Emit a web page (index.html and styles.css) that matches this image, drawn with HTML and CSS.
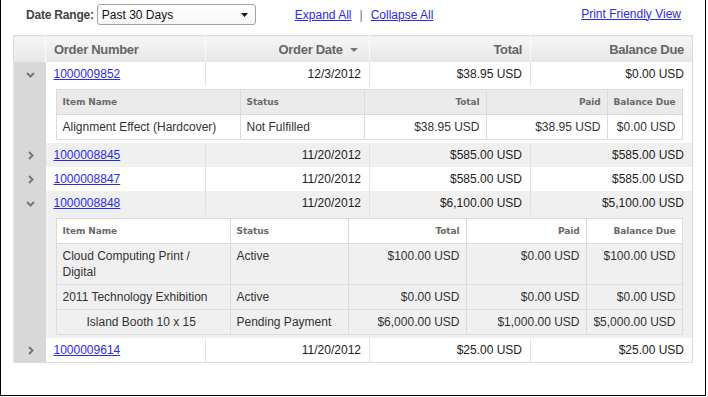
FILE: index.html
```html
<!DOCTYPE html>
<html lang="en">
<head>
    <meta charset="UTF-8">
    <meta name="viewport" content="width=device-width, initial-scale=1.0">
    <title>Order History</title>
    <link rel="stylesheet" href="styles.css">
</head>
<body>
    <div class="page">
        <div class="toolbar">
            <label class="range-label" for="range">Date Range:</label>
            <div class="select-wrap">
                <select id="range" class="range-select">
                    <option>Past 30 Days</option>
                    <option>Past 60 Days</option>
                    <option>Past 90 Days</option>
                </select>
                <svg class="select-arrow" width="7" height="4" viewBox="0 0 7 4"><path d="M0 0H7L3.5 4Z"/></svg>
            </div>
            <div class="bulk-links">
                <a href="#">Expand All</a><span class="sep">|</span><a href="#">Collapse All</a>
            </div>
            <a class="print-link" href="#">Print Friendly View</a>
        </div>

        <table class="orders">
            <colgroup>
                <col class="col-toggle">
                <col class="col-number">
                <col class="col-date">
                <col class="col-total">
                <col class="col-balance">
            </colgroup>
            <thead>
                <tr>
                    <th class="toggle"></th>
                    <th class="left">Order Number</th>
                    <th class="sorted">Order Date <svg class="sort-arrow" width="8" height="4" viewBox="0 0 8 4"><path d="M0 0H8L4 4Z"/></svg></th>
                    <th>Total</th>
                    <th>Balance Due</th>
                </tr>
            </thead>
            <tbody>
                <tr class="order">
                    <td class="toggle"><svg width="9" height="6" viewBox="0 0 9 6"><polyline points="1,1 4.5,4.5 8,1"/></svg></td>
                    <td class="left"><a href="#">1000009852</a></td>
                    <td>12/3/2012</td>
                    <td>$38.95 USD</td>
                    <td>$0.00 USD</td>
                </tr>
                <tr class="detail">
                    <td class="toggle"></td>
                    <td class="detail-cell" colspan="4">
                        <table class="items items-a">
                            <colgroup>
                                <col class="c-name"><col class="c-status"><col class="c-total"><col class="c-paid"><col class="c-due">
                            </colgroup>
                            <tr>
                                <th>Item Name</th>
                                <th>Status</th>
                                <th class="num">Total</th>
                                <th class="num">Paid</th>
                                <th class="num">Balance Due</th>
                            </tr>
                            <tr>
                                <td>Alignment Effect (Hardcover)</td>
                                <td>Not Fulfilled</td>
                                <td class="num">$38.95 USD</td>
                                <td class="num">$38.95 USD</td>
                                <td class="num">$0.00 USD</td>
                            </tr>
                        </table>
                    </td>
                </tr>
                <tr class="order alt">
                    <td class="toggle"><svg width="6" height="9" viewBox="0 0 6 9"><polyline points="1,1 4.5,4.5 1,8"/></svg></td>
                    <td class="left"><a href="#">1000008845</a></td>
                    <td>11/20/2012</td>
                    <td>$585.00 USD</td>
                    <td>$585.00 USD</td>
                </tr>
                <tr class="order">
                    <td class="toggle"><svg width="6" height="9" viewBox="0 0 6 9"><polyline points="1,1 4.5,4.5 1,8"/></svg></td>
                    <td class="left"><a href="#">1000008847</a></td>
                    <td>11/20/2012</td>
                    <td>$585.00 USD</td>
                    <td>$585.00 USD</td>
                </tr>
                <tr class="order alt">
                    <td class="toggle"><svg width="9" height="6" viewBox="0 0 9 6"><polyline points="1,1 4.5,4.5 8,1"/></svg></td>
                    <td class="left"><a href="#">1000008848</a></td>
                    <td>11/20/2012</td>
                    <td>$6,100.00 USD</td>
                    <td>$5,100.00 USD</td>
                </tr>
                <tr class="detail alt">
                    <td class="toggle"></td>
                    <td class="detail-cell" colspan="4">
                        <table class="items items-b">
                            <colgroup>
                                <col class="c-name"><col class="c-status"><col class="c-total"><col class="c-paid"><col class="c-due">
                            </colgroup>
                            <tr>
                                <th>Item Name</th>
                                <th>Status</th>
                                <th class="num">Total</th>
                                <th class="num">Paid</th>
                                <th class="num">Balance Due</th>
                            </tr>
                            <tr>
                                <td>Cloud Computing Print / Digital</td>
                                <td>Active</td>
                                <td class="num">$100.00 USD</td>
                                <td class="num">$0.00 USD</td>
                                <td class="num">$100.00 USD</td>
                            </tr>
                            <tr>
                                <td>2011 Technology Exhibition</td>
                                <td>Active</td>
                                <td class="num">$0.00 USD</td>
                                <td class="num">$0.00 USD</td>
                                <td class="num">$0.00 USD</td>
                            </tr>
                            <tr>
                                <td class="sub-item">Island Booth 10 x 15</td>
                                <td>Pending Payment</td>
                                <td class="num">$6,000.00 USD</td>
                                <td class="num">$1,000.00 USD</td>
                                <td class="num">$5,000.00 USD</td>
                            </tr>
                        </table>
                    </td>
                </tr>
                <tr class="order">
                    <td class="toggle"><svg width="6" height="9" viewBox="0 0 6 9"><polyline points="1,1 4.5,4.5 1,8"/></svg></td>
                    <td class="left"><a href="#">1000009614</a></td>
                    <td>11/20/2012</td>
                    <td>$25.00 USD</td>
                    <td>$25.00 USD</td>
                </tr>
            </tbody>
        </table>
    </div>
</body>
</html>
```

FILE: styles.css
```css
body {
    margin: 0;
    padding: 0;
    background: #fff;
    font-family: 'Liberation Sans', Arial, sans-serif;
    font-size: 12px;
    color: #222;
}

a {
    color: #2a2aee;
}

.page {
    box-sizing: border-box;
    width: 706px;
    height: 396px;
    border: 1px solid #000;
    border-top: none;
    padding: 0 13px 0 12px;
}

/* top bar */
.toolbar {
    display: flex;
    align-items: center;
    height: 21px;
    padding: 4px 11px 0 13px;
    margin-bottom: 10px;
}

.range-label {
    font-weight: bold;
    color: #444;
    letter-spacing: -0.2px;
    margin-right: 3px;
}

.select-wrap {
    position: relative;
}

.range-select {
    appearance: none;
    -webkit-appearance: none;
    box-sizing: border-box;
    width: 159px;
    height: 21px;
    margin: 0;
    padding: 0 0 0 4px;
    border: 1px solid #a3a3a3;
    border-radius: 3px;
    background: linear-gradient(#fff, #f6f6f6);
    font-family: inherit;
    font-size: 12px;
    color: #111;
}

.select-arrow {
    position: absolute;
    right: 8px;
    top: 9px;
    fill: #111;
    pointer-events: none;
}

.bulk-links {
    margin-left: 39px;
}

.sep {
    margin: 0 8px;
    color: #7a6a8a;
}

.print-link {
    margin-left: auto;
    margin-top: -2px;
}

/* orders table */
.orders {
    width: 679px;
    border-collapse: collapse;
    table-layout: fixed;
    border: 1px solid #dcdcdc;
}

.col-toggle { width: 32px; }
.col-number { width: 160px; }
.col-date { width: 164px; }
.col-total { width: 161px; }
.col-balance { width: 162px; }

.orders thead th {
    height: 26px;
    padding: 0 8px;
    text-align: right;
    font-size: 13px;
    font-weight: bold;
    letter-spacing: -0.3px;
    color: #666;
    background: linear-gradient(#f6f6f6, #e7e7e7);
}

.orders thead th + th {
    border-left: 1px solid #fafafa;
}

.orders thead th.sorted {
    padding-right: 11px;
}

.sort-arrow {
    fill: #777;
    margin-left: 4px;
    vertical-align: middle;
}

.orders thead .left {
    text-align: left;
}

.order td {
    height: 23px;
    padding: 0 8px 1px;
    text-align: right;
}

.order td + td + td {
    border-left: 1px solid #e2e2e2;
}

.order td.left {
    text-align: left;
}

.alt {
    background: #f0f0f0;
}

.orders td.toggle {
    padding: 0 0 0 2px;
    text-align: center;
    background: #d8d8d8;
    border-left: 1px solid #e6e6e6;
}

.toggle svg {
    vertical-align: middle;
    fill: none;
    stroke: #777;
    stroke-width: 2;
}

.detail-cell {
    padding: 3px 11px 3px 10px;
}

/* line items inside an expanded order */
.items {
    width: 100%;
    border-collapse: collapse;
    table-layout: fixed;
}

.items th,
.items td {
    border: 1px solid #dcdcdc;
    padding: 4px 6px;
    line-height: 16px;
    text-align: left;
    vertical-align: top;
}

.items th {
    font-family: 'DejaVu Sans', Verdana, sans-serif;
    font-size: 9px;
    font-weight: bold;
    letter-spacing: -0.1px;
    white-space: nowrap;
    color: #6a6a6a;
    background: #ebebeb;
}

.items td {
    color: #333;
}

.alt .items th {
    background: #fff;
}

.items .num {
    text-align: right;
}

.items .sub-item {
    padding-left: 30px;
}

.items-a .c-name { width: 184px; }
.items-a .c-status { width: 124px; }
.items-a .c-total { width: 122px; }
.items-a .c-paid { width: 121px; }
.items-a .c-due { width: 75px; }

.items-b .c-name { width: 174px; }
.items-b .c-status { width: 118px; }
.items-b .c-total { width: 118px; }
.items-b .c-paid { width: 120px; }
.items-b .c-due { width: 96px; }
```
